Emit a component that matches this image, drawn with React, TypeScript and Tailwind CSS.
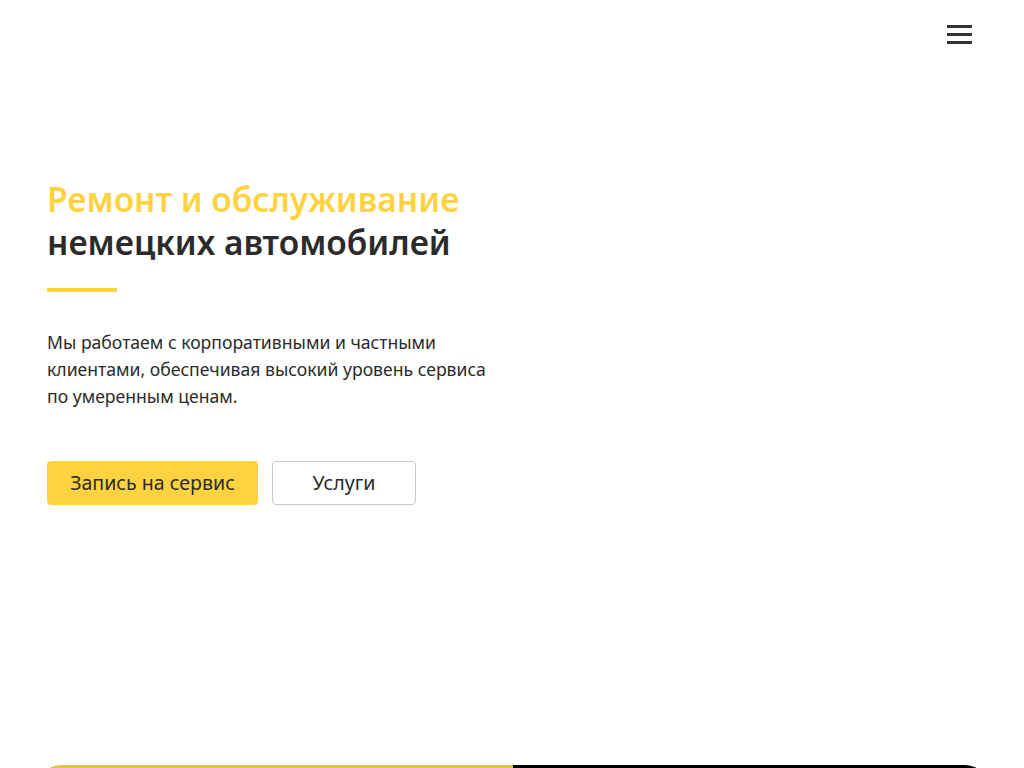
export default function App() {
    return (
        <div className="relative h-[768px] w-full overflow-hidden bg-white font-['Noto_Sans',sans-serif] text-[#2b2b2b]">
            <header className="flex justify-end px-[52px] pt-[25px]">
                <button className="flex w-[25px] flex-col gap-[5px]">
                    <span className="h-[3px] w-full bg-[#333]"></span>
                    <span className="h-[3px] w-full bg-[#333]"></span>
                    <span className="h-[3px] w-full bg-[#333]"></span>
                </button>
            </header>

            <section className="px-[47px] pt-[134px]">
                <h1 className="text-[33.5px] font-semibold leading-[43px]">
                    <span className="text-[#ffd340]">Ремонт и обслуживание</span>
                    <br />
                    немецких автомобилей
                </h1>
                <div className="mt-[24px] h-[4px] w-[70px] bg-[#ffd340]"></div>
                <p className="mt-[37px] w-[445px] text-[17.6px] leading-[27px]">
                    Мы работаем с корпоративными и частными клиентами, обеспечивая высокий уровень сервиса по умеренным ценам.
                </p>
                <div className="mt-[51px] flex gap-[14px]">
                    <button className="h-[44px] w-[211px] rounded-[4px] bg-[#ffd340] text-[19.6px]">
                        Запись на сервис
                    </button>
                    <button className="h-[44px] w-[144px] rounded-[4px] border border-[#c8c8c8] text-[19.6px]">
                        Услуги
                    </button>
                </div>
            </section>

            <div className="absolute bottom-[-20px] left-[38px] right-[36px] flex h-[23px] overflow-hidden rounded-t-[24px]">
                <div className="w-1/2 bg-[#e2c04c]"></div>
                <div className="w-1/2 bg-black"></div>
            </div>
        </div>
    )
}
